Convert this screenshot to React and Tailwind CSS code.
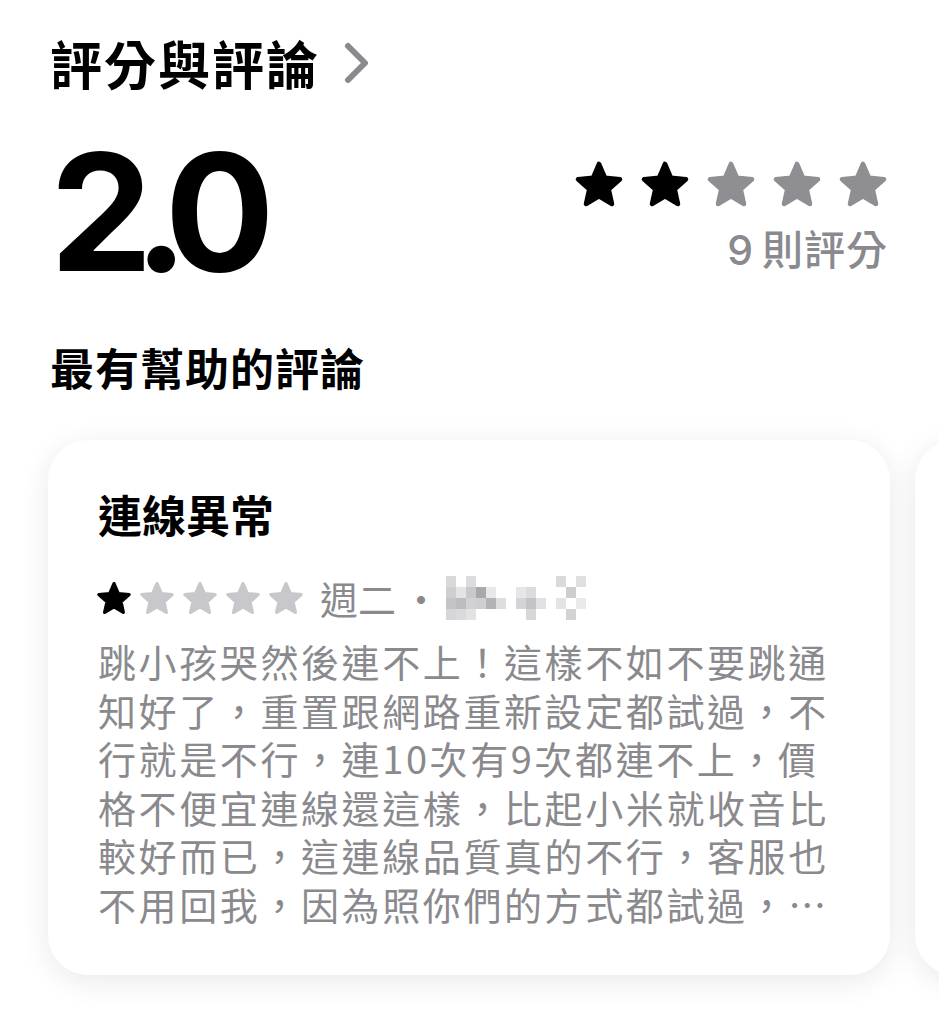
import React from "react";

const CJK = { fontFamily: '"Noto Sans CJK TC", "Noto Sans", sans-serif' };
const NUM = { fontFamily: 'Inter, "Noto Sans CJK TC", sans-serif' };

// rounded five-point star, points computed once
const starPoints = (() => {
  const pts = [];
  for (let i = 0; i < 10; i++) {
    const r = i % 2 === 0 ? 10.6 : 4.9;
    const a = (Math.PI / 5) * i - Math.PI / 2;
    pts.push(`${(12 + r * Math.cos(a)).toFixed(2)},${(13 + r * Math.sin(a)).toFixed(2)}`);
  }
  return pts.join(" ");
})();

function Star({ size, color }) {
  return (
    <svg width={size} height={size} viewBox="0 0 24 24">
      <polygon
        points={starPoints}
        fill={color}
        stroke={color}
        strokeWidth="2.2"
        strokeLinejoin="round"
      />
    </svg>
  );
}

function Chevron() {
  return (
    <svg width="26" height="42" viewBox="0 0 26 42">
      <path
        d="M4 4 L21 21 L4 38"
        fill="none"
        stroke="#8a8a8e"
        strokeWidth="6"
        strokeLinecap="round"
        strokeLinejoin="round"
      />
    </svg>
  );
}

// pixelated name block
function Mosaic() {
  const cells = [
    [0, 0, "#d9d9db"], [0, 1, "#cfcfd2"], [0, 2, "#c4c4c7"], [0, 3, "#d6d6d8"],
    [1, 1, "#e4e4e6"], [1, 2, "#bdbdc0"], [1, 3, "#dadadc"],
    [2, 0, "#dcdcde"], [2, 1, "#c9c9cc"], [2, 2, "#d2d2d4"], [2, 3, "#e3e3e5"],
    [3, 1, "#a9a9ad"], [3, 2, "#cfcfd2"],
    [4, 2, "#b3b3b6"], [4, 1, "#e8e8ea"],
    [5, 2, "#dedee0"],
    [7, 1, "#e6e6e8"], [7, 2, "#d4d4d6"], [8, 1, "#dcdcde"], [8, 2, "#c3c3c6"], [8, 3, "#d7d7d9"], [9, 2, "#e1e1e3"],
    [11, 0, "#dadadc"], [12, 1, "#cdcdd0"], [13, 0, "#e0e0e2"], [11, 2, "#e4e4e6"], [12, 3, "#d3d3d6"], [13, 2, "#eaeaec"],
  ];
  return (
    <svg width="140" height="44" viewBox="0 0 140 44">
      {cells.map(([x, y, c], i) => (
        <rect key={i} x={x * 10} y={y * 11} width="10" height="11" fill={c} />
      ))}
    </svg>
  );
}

const reviewLines = [
  "跳小孩哭然後連不上！這樣不如不要跳通",
  "知好了，重置跟網路重新設定都試過，不",
  "行就是不行，連10次有9次都連不上，價",
  "格不便宜連線還這樣，比起小米就收音比",
  "較好而已，這連線品質真的不行，客服也",
  "不用回我，因為照你們的方式都試過，…",
];

export default function App() {
  return (
    <div className="w-[939px] h-[1024px] bg-white overflow-hidden" style={CJK}>
      <div className="pl-[50px] pr-[51px] pt-[33px]">
        <div className="flex items-center gap-[24px]">
          <h2 className="text-[52px] leading-[60px] font-bold text-black tracking-[2px]">
            評分與評論
          </h2>
          <Chevron />
        </div>

        <div className="mt-[37px] flex justify-between items-start">
          <div
            className="text-[163px] leading-none font-bold text-black tracking-[-0.115em]"
            style={NUM}
          >
            2.0
          </div>
          <div className="mt-[29px] flex flex-col items-end">
            <div className="flex gap-[16px]">
              <Star size={50} color="#000000" />
              <Star size={50} color="#000000" />
              <Star size={50} color="#8e8e93" />
              <Star size={50} color="#8e8e93" />
              <Star size={50} color="#8e8e93" />
            </div>
            <div className="mt-[14px] text-[41px] leading-[48px] text-[#8a8a8e] font-medium tracking-[1px]">
              <span className="mr-[8px]" style={NUM}>9</span>則評分
            </div>
          </div>
        </div>

        <h3 className="mt-[48px] text-[44px] leading-[52px] font-bold text-black tracking-[1px]">
          最有幫助的評論
        </h3>
      </div>

      <div className="mt-[47px] flex gap-[25px] pl-[48px] pb-[40px]">
        <div className="w-[842px] shrink-0 rounded-[40px] bg-white shadow-[0_6px_30px_rgba(0,0,0,0.09)] pl-[50px] pr-[40px] pt-[48px] pb-[46px]">
          <div className="text-[44px] leading-[52px] font-bold text-black">連線異常</div>
          <div className="mt-[38px] flex items-center h-[40px]">
            <div className="flex gap-[7px] -ml-[2px]">
              <Star size={36} color="#000000" />
              <Star size={36} color="#c7c7cc" />
              <Star size={36} color="#c7c7cc" />
              <Star size={36} color="#c7c7cc" />
              <Star size={36} color="#c7c7cc" />
            </div>
            <span className="ml-[16px] text-[38px] leading-[44px] text-[#8a8a8e]">週二</span>
            <span className="ml-[6px] text-[38px] leading-[44px] text-[#8a8a8e]">·</span>
            <span className="ml-[6px]">
              <Mosaic />
            </span>
          </div>
          <div className="mt-[19px] text-[38px] leading-[48.6px] text-[#8a8a8e] tracking-[2.6px]">
            {reviewLines.map((l) => (
              <div key={l} className="whitespace-nowrap">
                {l}
              </div>
            ))}
          </div>
        </div>
        <div className="w-[842px] shrink-0 rounded-[40px] bg-white shadow-[0_6px_30px_rgba(0,0,0,0.09)]" />
      </div>
    </div>
  );
}
